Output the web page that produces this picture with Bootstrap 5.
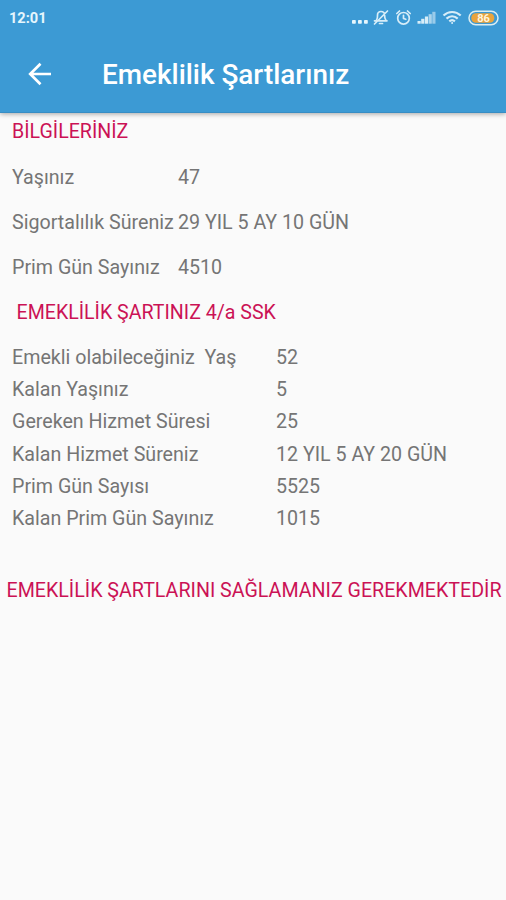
<!DOCTYPE html>
<html lang="tr">
<head>
<meta charset="utf-8">
<meta name="viewport" content="width=device-width, initial-scale=1">
<title>Emeklilik Şartlarınız</title>
<link href="https://cdn.jsdelivr.net/npm/bootstrap@5.3.0/dist/css/bootstrap.min.css" rel="stylesheet">
<style>
body { background: #fafafa; color: #757575; font-family: Roboto, sans-serif; font-size: 19.65px; min-height: 900px; overflow: hidden; }
.app-header { background: #3c9ad4; height: 113px; border-bottom: 1px solid #378dc4; box-shadow: 0 1px 5px rgba(0,0,0,.35); color: #fff; position: relative; }
.status-bar { height: 36px; padding: 0 7px 0 9px; color: #e6f6fd; }
.clock { font-size: 14.6px; font-weight: 700; line-height: 36px; }
.title-bar { height: 76px; padding-left: 24px; }
.back { width: 32px; height: 32px; margin-right: 46px; background: none; border: 0; color: #fff; }
.page-title { font-size: 27.9px; font-weight: 500; line-height: 76px; padding-top: 2px; white-space: nowrap; }
.heading { color: #cb1255; white-space: nowrap; font-size: 19.6px; }
.heading-info { line-height: 37px; margin-bottom: 5px; }
.heading-terms { line-height: 45px; padding-left: 4.5px; }
.info-row { line-height: 45px; white-space: nowrap; }
.info-row dt { width: 166px; }
.terms { padding-top: 6.5px; }
.term-row { height: 32.4px; line-height: 32.4px; white-space: pre; }
.term-row dt { width: 264px; }
dt, dd { font-weight: 400; margin: 0; }
.notice { font-size: 19.65px; line-height: 36px; margin-top: 37.5px; padding-left: 6.5px; }
</style>
<script src="https://cdn.jsdelivr.net/npm/bootstrap@5.3.0/dist/js/bootstrap.bundle.min.js"></script>
</head>
<body>
<header class="app-header">
  <div class="status-bar d-flex justify-content-between align-items-center">
    <span class="clock">12:01</span>
    <svg width="148" height="24" viewBox="351 6 148 24" fill="none" stroke="#d7edf8" stroke-width="1.5" stroke-linecap="round" stroke-linejoin="round" aria-hidden="true">
      <g fill="#e6f6fd" stroke="none"><rect x="352" y="20" width="3.8" height="3.8" rx=".8"/><rect x="358" y="20" width="3.8" height="3.8" rx=".8"/><rect x="364" y="20" width="3.8" height="3.8" rx=".8"/></g>
      <path stroke-width="1.7" d="M374.500 20.800h12.500M376.500 20c1.300-1.600 1-3.400 1-4.800 0-2.400 1.500-3.700 3.500-3.700s3.600 1.300 3.600 3.700c0 1.400 0 3.200 1.200 4.800M379.500 23.500h3M374.500 24 387.500 11"/>
      <circle cx="403.500" cy="18.300" r="5.800" stroke-width="1.700"/><path stroke-width="1.700" d="M403.500 15.300v3.200l2.300.8M396.800 13.500l2.700-2.500M410.200 13.500l-2.700-2.500"/>
      <g stroke="none" fill="#d7edf8"><rect x="417.500" y="21" width="3.200" height="2.700"/><rect x="421.200" y="18.800" width="3.200" height="4.900"/><rect x="424.900" y="16.500" width="3.200" height="7.200"/><rect x="428.600" y="14.200" width="3.200" height="9.500" opacity=".7"/><rect x="432.300" y="11.800" width="3.200" height="11.900" opacity=".6"/></g>
      <path stroke-width="2.200" stroke-linecap="butt" d="M443.500 15.500c5-4.700 12.200-4.700 17.200 0M446.500 18.600c3.300-3 7.900-3 11.200 0M449.300 21.400c1.700-1.500 3.900-1.500 5.600 0"/><circle cx="452.100" cy="22.900" r="1" fill="#d7edf8" stroke="none"/>
      <rect x="469" y="11.200" width="29" height="13.600" rx="6.800" stroke="#d9edf2"/><rect x="471.300" y="13.200" width="23" height="9.600" rx="4.500" fill="#e9a43d" stroke="none"/>
      <text x="483.500" y="21.900" text-anchor="middle" fill="#fff5df" stroke="none" font-family="Roboto, sans-serif" font-size="11" font-weight="700">86</text>
    </svg>
  </div>
  <div class="title-bar d-flex align-items-center">
    <button class="back p-0 d-flex" type="button" aria-label="Geri">
      <svg width="32" height="32" viewBox="0 0 32 32" fill="none" stroke="currentColor" stroke-width="2.700"><path d="M27 16H6.500M16.500 5.700 6.200 16l10.300 10.300"/></svg>
    </button>
    <h1 class="page-title mb-0">Emeklilik Şartlarınız</h1>
  </div>
</header>
<main>
  <section class="ps-2 ms-1">
    <div class="heading heading-info">BİLGİLERİNİZ</div>
    <dl class="m-0">
      <div class="info-row d-flex"><dt>Yaşınız</dt><dd>47</dd></div>
      <div class="info-row d-flex"><dt>Sigortalılık Süreniz</dt><dd>29 YIL 5 AY 10 GÜN</dd></div>
      <div class="info-row d-flex"><dt>Prim Gün Sayınız</dt><dd>4510</dd></div>
    </dl>
    <div class="heading heading-terms">EMEKLİLİK ŞARTINIZ 4/a SSK</div>
    <dl class="terms m-0">
      <div class="term-row d-flex"><dt>Emekli olabileceğiniz  Yaş</dt><dd>52</dd></div>
      <div class="term-row d-flex"><dt>Kalan Yaşınız</dt><dd>5</dd></div>
      <div class="term-row d-flex"><dt>Gereken Hizmet Süresi</dt><dd>25</dd></div>
      <div class="term-row d-flex"><dt>Kalan Hizmet Süreniz</dt><dd>12 YIL 5 AY 20 GÜN</dd></div>
      <div class="term-row d-flex"><dt>Prim Gün Sayısı</dt><dd>5525</dd></div>
      <div class="term-row d-flex"><dt>Kalan Prim Gün Sayınız</dt><dd>1015</dd></div>
    </dl>
  </section>
  <div class="heading notice">EMEKLİLİK ŞARTLARINI SAĞLAMANIZ GEREKMEKTEDİR</div>
</main>
</body>
</html>
